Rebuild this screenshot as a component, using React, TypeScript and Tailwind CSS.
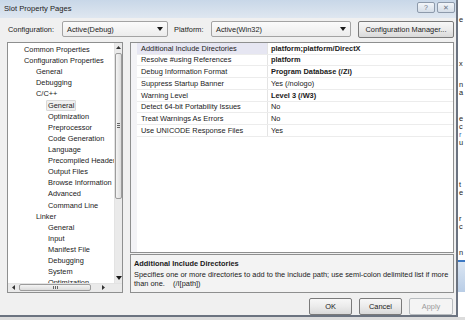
import React from "react";

const FONT = { fontFamily: '"Liberation Sans", Arial, sans-serif' };

type TreeItem = { level: number; text: string; selected?: boolean };

const treeItems: TreeItem[] = [
    { level: 0, text: "Common Properties" },
    { level: 0, text: "Configuration Properties" },
    { level: 1, text: "General" },
    { level: 1, text: "Debugging" },
    { level: 1, text: "C/C++" },
    { level: 2, text: "General", selected: true },
    { level: 2, text: "Optimization" },
    { level: 2, text: "Preprocessor" },
    { level: 2, text: "Code Generation" },
    { level: 2, text: "Language" },
    { level: 2, text: "Precompiled Headers" },
    { level: 2, text: "Output Files" },
    { level: 2, text: "Browse Information" },
    { level: 2, text: "Advanced" },
    { level: 2, text: "Command Line" },
    { level: 1, text: "Linker" },
    { level: 2, text: "General" },
    { level: 2, text: "Input" },
    { level: 2, text: "Manifest File" },
    { level: 2, text: "Debugging" },
    { level: 2, text: "System" },
    { level: 2, text: "Optimization" },
];

type Prop = { name: string; value: string; bold: boolean };

const props: Prop[] = [
    { name: "Additional Include Directories", value: "platform;platform/DirectX", bold: true },
    { name: "Resolve #using References", value: "platform", bold: true },
    { name: "Debug Information Format", value: "Program Database (/Zi)", bold: true },
    { name: "Suppress Startup Banner", value: "Yes (/nologo)", bold: false },
    { name: "Warning Level", value: "Level 3 (/W3)", bold: true },
    { name: "Detect 64-bit Portability Issues", value: "No", bold: false },
    { name: "Treat Warnings As Errors", value: "No", bold: false },
    { name: "Use UNICODE Response Files", value: "Yes", bold: false },
];

const indent = ["pl-[16px]", "pl-[28px]", "pl-[40px]"];

const DownArrow = () => (
    <svg width="6" height="4" viewBox="0 0 6 4">
        <path d="M0 0H6L3 4Z" fill="#1a1a1a" />
    </svg>
);

const Combo = ({ text, width }: { text: string; width: string }) => (
    <div
        className={`${width} h-[16px] flex items-center justify-between pl-[4px] pr-[4px] border border-[#a3a3a3] rounded-[2px] bg-gradient-to-b from-[#fbfbfb] to-[#ececec]`}
    >
        <span>{text}</span>
        <DownArrow />
    </div>
);

const Button = ({
    text,
    width,
    disabled,
}: {
    text: string;
    width: string;
    disabled?: boolean;
}) => (
    <div
        className={`${width} h-[17px] flex items-center justify-center rounded-[2px] border ${
            disabled
                ? "border-[#b8bcbf] bg-[#f4f4f4] text-[#9a9a9a]"
                : "border-[#7a7a7a] bg-gradient-to-b from-[#f7f7f7] via-[#ebebeb] to-[#d9d9d9] text-[#1a1a1a]"
        }`}
    >
        {text}
    </div>
);

export default function App() {
    return (
        <div
            className="w-[465px] h-[320px] flex bg-[#dcdcdc] overflow-hidden text-[7.4px] text-[#1a1a1a]"
            style={FONT}
        >
            {/* Dialog window */}
            <div className="w-[458px] h-[317px] flex flex-col bg-[#f0f0f0] border-r-2 border-b-2 border-[#6b7380] shrink-0">
                {/* Title bar */}
                <div className="h-[18px] flex items-center justify-between pl-[4px] pr-[1px] bg-gradient-to-b from-[#c8d7e8] to-[#dfe7f0]">
                    <span className="text-[7.6px] text-[#222]">Slot Property Pages</span>
                    <div className="flex gap-[2px] mb-[2px]">
                        <div className="w-[18px] h-[11px] flex items-center justify-center rounded-[2px] border border-[#8d9aab] bg-gradient-to-b from-[#f2f5f9] to-[#d5dee8] text-[7px] text-[#6b7584]">
                            ?
                        </div>
                        <div className="w-[18px] h-[11px] flex items-center justify-center rounded-[2px] border border-[#8d9aab] bg-gradient-to-b from-[#f2f5f9] to-[#d5dee8] text-[7px] text-[#6b7584]">
                            ✕
                        </div>
                    </div>
                </div>

                {/* Configuration row */}
                <div className="h-[21px] flex items-center pl-[8px] mt-[1px]">
                    <span className="w-[54px]">Configuration:</span>
                    <Combo text="Active(Debug)" width="w-[106px]" />
                    <span className="ml-[6px] w-[37px]">Platform:</span>
                    <Combo text="Active(Win32)" width="w-[140px]" />
                    <div className="ml-[7px]">
                        <Button text="Configuration Manager..." width="w-[96px]" />
                    </div>
                </div>

                {/* Main panels */}
                <div className="flex mt-[2px] h-[252px]">
                    {/* Tree */}
                    <div className="ml-[7px] w-[116px] h-full border border-[#8e8f8f] bg-white flex flex-col">
                        <div className="flex h-[240px]">
                            <div className="flex-1 overflow-hidden pt-[1px]">
                                {treeItems.map((it, i) => (
                                    <div
                                        key={i}
                                        className={`h-[11.13px] flex items-center whitespace-nowrap ${indent[it.level]}`}
                                    >
                                        <span
                                            className={
                                                it.selected
                                                    ? "px-[1px] -mx-[2px] border border-[#d9d9d9] bg-[#f0f0f0] rounded-[1px] leading-[9px]"
                                                    : ""
                                            }
                                        >
                                            {it.text}
                                        </span>
                                    </div>
                                ))}
                            </div>
                            {/* Vertical scrollbar */}
                            <div className="w-[8px] bg-[#eaeaea] flex flex-col items-center border-l border-[#e3e3e3]">
                                <div className="h-[10px] flex items-center justify-center">
                                    <svg width="5" height="3" viewBox="0 0 5 3">
                                        <path d="M0 3H5L2.5 0Z" fill="#333" />
                                    </svg>
                                </div>
                                <div className="w-[7px] h-[146px] rounded-[2px] border border-[#9c9c9c] bg-gradient-to-r from-[#f4f4f4] to-[#dcdcdc] flex items-center justify-center">
                                    <div className="flex flex-col gap-[1px]">
                                        <div className="w-[3px] h-[1px] bg-[#666]" />
                                        <div className="w-[3px] h-[1px] bg-[#666]" />
                                        <div className="w-[3px] h-[1px] bg-[#666]" />
                                    </div>
                                </div>
                                <div className="flex-1" />
                                <div className="h-[10px] flex items-center justify-center">
                                    <DownArrow />
                                </div>
                            </div>
                        </div>
                        {/* Horizontal scrollbar */}
                        <div className="h-[9px] flex items-center bg-[#eaeaea] border-t border-[#e3e3e3]">
                            <div className="w-[11px] flex justify-center">
                                <svg width="3" height="5" viewBox="0 0 3 5">
                                    <path d="M3 0V5L0 2.5Z" fill="#333" />
                                </svg>
                            </div>
                            <div className="w-[72px] h-[7px] rounded-[2px] border border-[#9c9c9c] bg-gradient-to-b from-[#f4f4f4] to-[#dcdcdc] flex items-center justify-center gap-[1px]">
                                <div className="w-[1px] h-[3px] bg-[#666]" />
                                <div className="w-[1px] h-[3px] bg-[#666]" />
                                <div className="w-[1px] h-[3px] bg-[#666]" />
                            </div>
                            <div className="w-[14px] flex justify-end">
                                <svg width="3" height="5" viewBox="0 0 3 5">
                                    <path d="M0 0V5L3 2.5Z" fill="#333" />
                                </svg>
                            </div>
                            <div className="flex-1" />
                        </div>
                    </div>

                    {/* Property grid + description */}
                    <div className="ml-[7px] w-[324px] h-full flex flex-col">
                        <div className="h-[211px] border border-[#8e8f8f] bg-white flex">
                            <div className="w-[6px] bg-[#f3f3f6]" />
                            <div className="flex-1 flex flex-col">
                                {props.map((p, i) => (
                                    <div key={i} className="h-[11.75px] flex border-b border-[#ececec]">
                                        <div
                                            className={`w-[131px] flex items-center pl-[4px] border-r border-[#e4e4e4] whitespace-nowrap ${
                                                i === 0 ? "bg-[#e6e6f2]" : ""
                                            }`}
                                        >
                                            {p.name}
                                        </div>
                                        <div
                                            className={`flex-1 flex items-center pl-[3px] whitespace-nowrap ${
                                                p.bold ? "font-bold" : ""
                                            }`}
                                        >
                                            {p.value}
                                        </div>
                                    </div>
                                ))}
                            </div>
                        </div>
                        <div className="mt-[1px] h-[39px] border border-[#8e8f8f] bg-[#f3f3f3] pl-[3px] pt-[4px] flex flex-col">
                            <div className="font-bold leading-[9px]">Additional Include Directories</div>
                            <div className="leading-[9.5px] mt-[2px]">
                                Specifies one or more directories to add to the include path; use
                                semi-colon delimited list if more than one.&nbsp;&nbsp;&nbsp;&nbsp;(/I[path])
                            </div>
                        </div>
                    </div>
                </div>

                {/* Buttons */}
                <div className="flex justify-end gap-[7px] pr-[3px] mt-[5px]">
                    <Button text="OK" width="w-[43px]" />
                    <Button text="Cancel" width="w-[43px]" />
                    <Button text="Apply" width="w-[44px]" disabled />
                </div>
            </div>

            {/* Background window sliver */}
            <div className="flex-1 h-[317px] bg-white relative overflow-hidden text-[7.4px] leading-[8px]">
                <div className="flex flex-col pl-[1px] pt-[16px]">
                    <span className="h-[44px]">e</span>
                    <span className="h-[8px] mt-[0px]">x</span>
                    <span className="mt-[13px]">n</span>
                    <span>a</span>
                    <span className="mt-[18px]">e</span>
                    <span>c</span>
                    <span className="text-[#3a62a8]">r</span>
                    <span>u</span>
                    <span className="mt-[34px]">t</span>
                    <span>e</span>
                    <span className="mt-[18px]">r</span>
                    <span>c</span>
                    <span className="mt-[18px]">n</span>
                </div>
                <div className="h-[2px] bg-[#3b78c4] mt-[3px]" />
                <div className="h-[30px] bg-gradient-to-b from-[#dbe6f3] to-[#b9cde6]" />
            </div>
        </div>
    );
}
